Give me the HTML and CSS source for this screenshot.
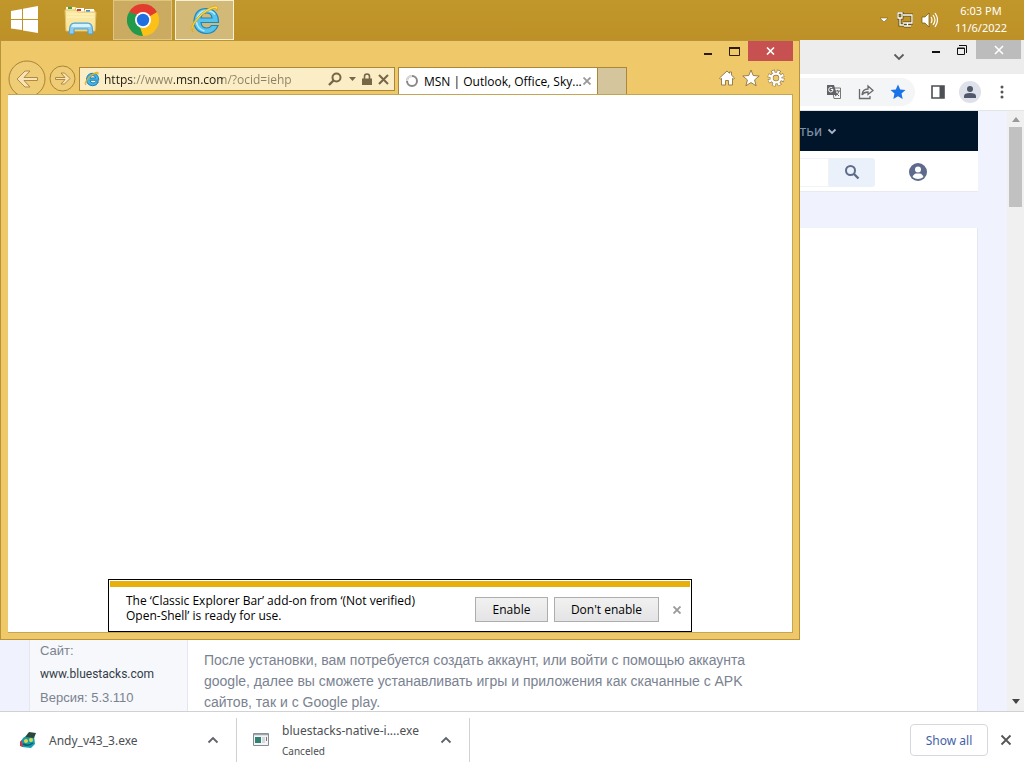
FILE: index.html
```html
<!DOCTYPE html>
<html lang="en">
<head>
  <meta charset="UTF-8">
  <title>Desktop</title>
  <link rel="stylesheet" href="styles.css">
</head>
<body>

  <header class="taskbar">
    <button class="start" aria-label="Start">
      <svg width="28" height="28" viewBox="0 0 28 28" fill="#fff"><path d="M0 5l11-2v10H0zM12 2.800L27 0v13H12zM0 14h11v10L0 22.500zM12 14h15v13l-15-2.500z"/></svg>
    </button>
    <button class="task" aria-label="File Explorer">
      <svg width="34" height="30" viewBox="0 0 34 30">
        <path d="M2 2h10l2 3h17v20H2z" fill="#e8c868"/>
        <path d="M2 2h9v4H2z" fill="#fdf3cf"/><path d="M4 2h4v2H4z" fill="#3fa34d"/><path d="M12 3h8v4h-8z" fill="#fff"/><path d="M13 4h4v2h-4z" fill="#d0402f"/><path d="M21 4h9v4h-9z" fill="#fff"/><path d="M22 5h4v2h-4z" fill="#3a8fd8"/>
        <path d="M1 5h11l2 2h18l-1 19H2z" fill="#fae8a0" stroke="#e3c267"/>
        <path d="M3 9h27M3 12h27" stroke="#fff4c4"/>
        <path d="M5 29l1-8q1-3 4-3h14q3 0 4 3l1 8h-5v-5H10v5z" fill="#8ccdf0" stroke="#4f9fd0"/>
        <path d="M9 19h16l2 3H7z" fill="#d5f2ff"/>
      </svg>
    </button>
    <button class="task task-open" aria-label="Google Chrome">
      <svg width="32" height="32" viewBox="0 0 32 32">
        <path d="M16 16L2.140 8A16 16 0 0 1 29.860 8z" fill="#e33b2e"/>
        <path d="M16 16L29.860 8A16 16 0 0 1 16 32z" fill="#fbc116"/>
        <path d="M16 16v16A16 16 0 0 1 2.140 8z" fill="#229a4b"/>
        <path d="M16 8h13.860L16 16z" fill="#e33b2e"/><path d="M22.900 20L16 32l-4-12z" fill="#fbc116"/><path d="M9 20L2.140 8 14 12z" fill="#229a4b"/>
        <circle cx="16" cy="16" r="8" fill="#fff"/><circle cx="16" cy="16" r="6.200" fill="#1f6fe0"/>
      </svg>
    </button>
    <button class="task task-active" aria-label="Internet Explorer">
      <svg width="32" height="32" viewBox="0 0 32 32">
        <path d="M29.500 18.500H12q.5 5.500 6 5.500 3 0 4.500-2.500h6.500Q26 29.500 17.500 29.500 5 28.500 5 17 6 4.500 17.500 4.500 29.500 5.500 29.500 18.500zM12 14h11q-.5-5-5.500-5T12 14z" fill="#58c4ee" stroke="#1a86be" stroke-width="1.200"/>
        <path d="M8 14q2-6 8-7.500 7-.5 10 4M7.500 18q1 7 8 9" fill="none" stroke="#b8ecfb" stroke-width="1.500"/>
        <path d="M4 28Q-1 26 7 15 18 3 26 2q4 0 2 5 0-4-5-2Q13 9 6 19q-4 7-2 9z" fill="#ffe14a" stroke="#d8a51b" stroke-width=".8"/>
      </svg>
    </button>
    <div class="tray">
      <svg width="10" height="6" viewBox="0 0 10 6"><path d="M1 1h8L5 5z" fill="#fff" stroke="#6d5213" stroke-width=".5"/></svg>
      <svg width="16" height="16" viewBox="0 0 16 16" fill="none"><path d="M6 3h9v8H6M10.500 11v3M7 14h7M3 6v7h4M1 1h4v5H1z" stroke="#5f4a18" stroke-width="3"/><path d="M6 3h9v8H6M10.500 11v3M7 14h7M3 6v7h4M1 1h4v5H1z" stroke="#fff" stroke-width="1.300"/></svg>
      <svg width="17" height="16" viewBox="0 0 17 16"><path d="M1 5h3l4-4v14l-4-4H1z" fill="#fff" stroke="#6d5213" stroke-width=".7"/><path d="M10 5q2 3 0 6M12 3q4 5 0 10M14 1q5 7 0 14" fill="none" stroke="#fff" stroke-width="1.200"/></svg>
      <div class="clock">
        <time>6:03 PM</time>
        <time>11/6/2022</time>
      </div>
    </div>
  </header>

  <main class="desktop">
    <section class="chrome">
      <div class="chrome-title">
        <button class="tab-search" aria-label="Search tabs">
          <svg width="12" height="8" viewBox="0 0 12 8"><path d="M1.500 1.500L6 6l4.500-4.500" fill="none" stroke="#5c5c5c" stroke-width="1.800"/></svg>
        </button>
        <button class="chrome-control" aria-label="Minimize">
          <svg width="10" height="10" viewBox="0 0 10 10"><path d="M1 6h8v2H1z" fill="#111"/></svg>
        </button>
        <button class="chrome-control" aria-label="Restore">
          <svg width="12" height="12" viewBox="0 0 12 12" fill="none" stroke="#111"><path d="M3 1.500h7.500V9"/><path d="M1.500 4h7v6.500h-7z"/><path d="M1 4.500h8"/></svg>
        </button>
        <button class="chrome-close" aria-label="Close">
          <svg width="10" height="10" viewBox="0 0 10 10"><path d="M1 1l8 8M9 1L1 9" stroke="#fff" stroke-width="1.600"/></svg>
        </button>
      </div>

      <div class="chrome-toolbar">
        <div class="omnibox">
          <button aria-label="Translate">
            <svg width="16" height="16" viewBox="0 0 16 16"><path d="M6 4h8.500v10.500H8z" fill="none" stroke="#777"/><path d="M1 1h7l3 10H1z" fill="#5f6368"/><path d="M7 5.500H4.800M7 5.500q0 2.500-2.200 2.500T2.700 5.700 4.800 3.300l1.500.6" fill="none" stroke="#fff" stroke-width="1"/><path d="M9 7h5M11.500 6v1M13 7q-1 4-4 5M10 9l3 3" fill="none" stroke="#666"/></svg>
          </button>
          <button aria-label="Share">
            <svg width="16" height="16" viewBox="0 0 16 16" fill="none" stroke="#666a6e" stroke-width="1.300"><path d="M1.500 5v9.500H12V12"/><path d="M4 11q.500-6 6-6V2l5 4.500-5 4V8q-4 0-6 3z"/></svg>
          </button>
          <button aria-label="Bookmark">
            <svg width="16" height="16" viewBox="0 0 16 16"><path d="M8 .5l2.200 5 5.300.5-4 3.600 1.200 5.400L8 12.200 3.300 15l1.200-5.400L.5 6l5.300-.5z" fill="#1a73e8"/></svg>
          </button>
        </div>
        <button aria-label="Side panel">
          <svg width="14" height="14" viewBox="0 0 14 14"><path d="M1 1h12v12H1z" fill="#fff" stroke="#4c4f53" stroke-width="1.600"/><path d="M8.500 1H13v12H8.500z" fill="#4c4f53"/></svg>
        </button>
        <button class="profile" aria-label="Profile">
          <svg width="14" height="14" viewBox="0 0 14 14" fill="#50586b"><circle cx="7" cy="4" r="3"/><path d="M1 13v-2q0-3 6-3t6 3v2z"/></svg>
        </button>
        <button aria-label="Menu">
          <svg width="4" height="14" viewBox="0 0 4 14" fill="#555"><circle cx="2" cy="2" r="1.500"/><circle cx="2" cy="7" r="1.500"/><circle cx="2" cy="12" r="1.500"/></svg>
        </button>
      </div>

      <div class="viewport">
        <div class="site" lang="ru">
          <nav class="site-nav">
            <a href="#">Статьи
              <svg width="10" height="7" viewBox="0 0 10 7"><path d="M1.500 1.500L5 5l3.500-3.500" fill="none" stroke="#a9b4c9" stroke-width="1.800"/></svg>
            </a>
          </nav>
          <form class="site-search">
            <input type="search" aria-label="Поиск">
            <button type="button" class="search-button" aria-label="Найти">
              <svg width="16" height="16" viewBox="0 0 16 16" fill="none" stroke="#5e6c8c"><circle cx="6.500" cy="6.500" r="4.500" stroke-width="2"/><path d="M10 10l4.500 4.500" stroke-width="2.400"/></svg>
            </button>
            <button type="button" class="account" aria-label="Аккаунт">
              <svg width="18" height="18" viewBox="0 0 18 18"><circle cx="9" cy="9" r="9" fill="#5d6a8b"/><circle cx="9" cy="6.500" r="3" fill="#fff"/><path d="M3.500 14Q5 10.500 7 10.500h4q2 0 3.500 3.500Q12 16 9 16t-5.500-2z" fill="#fff"/></svg>
            </button>
          </form>
          <div class="article">
            <aside class="facts">
              <p>Сайт:</p>
              <p><a href="#">www.bluestacks.com</a></p>
              <p>Версия: 5.3.110</p>
            </aside>
            <p class="article-text">После установки, вам потребуется создать аккаунт, или войти с помощью аккаунта google, далее вы сможете устанавливать игры и приложения как скачанные с APK сайтов, так и с Google play.</p>
          </div>
        </div>
        <div class="scrollbar">
          <svg width="8" height="5" viewBox="0 0 8 5"><path d="M0 5h8L4 0z" fill="#999"/></svg>
          <div class="thumb"></div>
          <svg width="8" height="5" viewBox="0 0 8 5"><path d="M0 0h8L4 5z" fill="#444"/></svg>
        </div>
      </div>

      <footer class="downloads">
        <div class="download">
          <svg width="16" height="16" viewBox="0 0 16 16"><path d="M0 10l4-5 10-1 1 8-4 4-9-1z" fill="#159eae"/><path d="M5 5l4-5 7 1-2 5z" fill="#29483a"/><path d="M0 10l2-2 1 7-3-1z" fill="#c33c55"/><circle cx="6" cy="9" r="2" fill="#e8d443"/><circle cx="11" cy="8" r="2" fill="#d8d84b"/><path d="M3 12q5 3 10-1" fill="none" stroke="#075e72" stroke-width="1.500"/></svg>
          <span class="download-text"><span class="file">Andy_v43_3.exe</span></span>
          <button aria-label="Andy_v43_3.exe options">
            <svg width="12" height="8" viewBox="0 0 12 8"><path d="M1.500 6.500L6 2l4.500 4.500" fill="none" stroke="#5f6368" stroke-width="1.800"/></svg>
          </button>
        </div>
        <div class="download">
          <svg width="16" height="14" viewBox="0 0 16 14"><path d="M.5.5h15v12H.5z" fill="#f4f4f6" stroke="#858b92"/><path d="M1 1.500h14" stroke="#9da4ab" stroke-width="1.500"/><path d="M2 4h6v6H2z" fill="#328273"/><path d="M9 5h3M9 7h3M9 9h3" stroke="#b7bcc4"/><path d="M13.500 4v4" stroke="#777"/></svg>
          <span class="download-text">
            <span class="file">bluestacks-native-i....exe</span>
            <small>Canceled</small>
          </span>
          <button aria-label="bluestacks-native-i....exe options">
            <svg width="12" height="8" viewBox="0 0 12 8"><path d="M1.500 6.500L6 2l4.500 4.500" fill="none" stroke="#5f6368" stroke-width="1.800"/></svg>
          </button>
        </div>
        <button class="show-all">Show all</button>
        <button class="close-downloads" aria-label="Close downloads">
          <svg width="12" height="12" viewBox="0 0 12 12"><path d="M1.500 1.500l9 9M10.500 1.500l-9 9" stroke="#555" stroke-width="1.800"/></svg>
        </button>
      </footer>
    </section>

    <section class="ie">
      <div class="ie-top">
        <div class="ie-nav">
          <button class="back" aria-label="Back">
            <svg width="38" height="38" viewBox="0 0 38 38"><circle cx="19" cy="19" r="18" fill="#efcd76" stroke="#a98336"/><path d="M29.500 17.500v3H16l6 6.500h-5l-8-8 8-8h5l-6 6.500z" fill="#f8e3b4" stroke="#b08a42"/></svg>
          </button>
          <button class="forward" aria-label="Forward">
            <svg width="27" height="27" viewBox="0 0 27 27"><circle cx="13.500" cy="13.500" r="12.500" fill="#efcd76" stroke="#a98336"/><path d="M6.500 12.500v2H16L12 19h3.500l5.500-5.500L15.500 8H12l4 4.500z" fill="#f8e3b4" stroke="#b08a42"/></svg>
          </button>
          <div class="address">
            <svg width="16" height="16" viewBox="0 0 32 32"><path d="M29.500 18.500H12q.5 5.500 6 5.500 3 0 4.500-2.500h6.500Q26 29.500 17.500 29.500 5 28.500 5 17 6 4.500 17.500 4.500 29.500 5.500 29.500 18.500zM12 14h11q-.5-5-5.500-5T12 14z" fill="#42b5ea" stroke="#1780ba" stroke-width="2"/><path d="M4 28Q-1 26 7 15 18 3 26 2q4 0 2 5 0-4-5-2Q13 9 6 19q-4 7-2 9z" fill="#f5c92c" stroke="#d09d18"/></svg>
            <input type="text" value="https://www.msn.com/?ocid=iehp" aria-label="Address">
            <button aria-label="Search">
              <svg width="14" height="14" viewBox="0 0 14 14" fill="none" stroke="#766747"><circle cx="8.500" cy="5.500" r="4" stroke-width="2"/><path d="M5.500 8.500L1 13" stroke-width="2.400"/></svg>
            </button>
            <button aria-label="Show address bar autocomplete">
              <svg width="8" height="5" viewBox="0 0 8 5"><path d="M1 0h7L4.500 4z" fill="#766747"/></svg>
            </button>
            <button aria-label="Security report">
              <svg width="10" height="13" viewBox="0 0 10 13"><path d="M2.500 6V3.500a2.500 2.500 0 0 1 5 0V6" fill="none" stroke="#766747" stroke-width="1.600"/><path d="M0 5.500h10V12H0z" fill="#766747"/></svg>
            </button>
            <button aria-label="Stop">
              <svg width="11" height="11" viewBox="0 0 11 11"><path d="M1 1l9 9M10 1l-9 9" stroke="#766747" stroke-width="2"/></svg>
            </button>
          </div>
          <div class="ie-tab">
            <svg width="14" height="14" viewBox="0 0 14 14" fill="none" stroke-width="2"><circle cx="7" cy="7" r="5" stroke="#888"/><path d="M2 7a5 5 0 0 1 5-5" stroke="#ddd"/></svg>
            <span>MSN | Outlook, Office, Sky...</span>
            <button aria-label="Close tab">
              <svg width="8" height="8" viewBox="0 0 8 8"><path d="M.5.5l7 7M7.500.5l-7 7" stroke="#999" stroke-width="1.800"/></svg>
            </button>
          </div>
          <button class="new-tab" aria-label="New tab"></button>
        </div>
        <div class="ie-side">
          <div class="caption">
            <button aria-label="Minimize">
              <svg width="10" height="10" viewBox="0 0 10 10"><path d="M1 7h8v2H1z" fill="#2b1d05"/></svg>
            </button>
            <button aria-label="Maximize">
              <svg width="11" height="9" viewBox="0 0 11 9"><path d="M.5 1h10v7.500H.5z" fill="none" stroke="#2b1d05"/><path d="M0 1h11" stroke="#2b1d05" stroke-width="2"/></svg>
            </button>
            <button class="ie-close" aria-label="Close">
              <svg width="9" height="8" viewBox="0 0 9 8"><path d="M1 .5l7 7M8 .5l-7 7" stroke="#fff" stroke-width="1.600"/></svg>
            </button>
          </div>
          <div class="tools">
            <button aria-label="Home">
              <svg width="16" height="16" viewBox="0 0 16 16"><path d="M8 1l2.500 2.300V2h2v3.200l3 2.800-1 1.200-1-.9V15H9.500v-4.500h-3V15h-4V8.300l-1 .9-1-1.200z" fill="#fff" stroke="#8f7440" stroke-width=".9"/></svg>
            </button>
            <button aria-label="Favorites">
              <svg width="18" height="18" viewBox="0 0 18 18"><path d="M9 1l2.200 5.500 6 .5-4.600 3.900 1.500 5.900L9 13.600l-5.100 3.200 1.500-5.900L.8 7l6-.5z" fill="#fff" stroke="#8f7440" stroke-width=".9"/></svg>
            </button>
            <button aria-label="Tools">
              <svg width="18" height="18" viewBox="0 0 18 18" fill="none"><circle cx="9" cy="9" r="6.500" stroke="#8f7440" stroke-width="4" stroke-dasharray="3.300 1.805"/><circle cx="9" cy="9" r="4.400" stroke="#8f7440" stroke-width="3.600"/><circle cx="9" cy="9" r="6.500" stroke="#fff" stroke-width="3" stroke-dasharray="2.300 2.805" stroke-dashoffset="-.5"/><circle cx="9" cy="9" r="4.400" stroke="#fff" stroke-width="2.400"/></svg>
            </button>
          </div>
        </div>
      </div>

      <div class="ie-page">
        <div class="notice" role="alert">
          <p>The ‘Classic Explorer Bar’ add-on from ‘(Not verified) Open-Shell’ is ready for use.</p>
          <button class="notice-button">Enable</button>
          <button class="notice-button wide">Don't enable</button>
          <button class="notice-close" aria-label="Dismiss">
            <svg width="8" height="8" viewBox="0 0 8 8"><path d="M.5.5l7 7M7.500.5l-7 7" stroke="#999" stroke-width="1.800"/></svg>
          </button>
        </div>
      </div>
    </section>
  </main>

</body>
</html>
```

FILE: styles.css
```css
* {
  box-sizing: border-box;
}

body {
  margin: 0;
  height: 100vh;
  display: flex;
  flex-direction: column;
  overflow: hidden;
  font-family: "Noto Sans", "Open Sans", sans-serif;
  font-size: 12px;
  color: #000;
}

button {
  display: flex;
  align-items: center;
  justify-content: center;
  flex: none;
  padding: 0;
  border: 0;
  background: none;
  font: inherit;
}

svg {
  display: block;
  flex: none;
}

p {
  margin: 0;
}

/* taskbar */
.taskbar {
  display: flex;
  flex: none;
  gap: 3px;
  height: 40px;
  background: linear-gradient(#c1962a, #bd9127);
}

.start {
  width: 48px;
  padding-left: 2px;
}

.task {
  width: 59px;
  border: 1px solid transparent;
}

.task-open {
  background: #cbab62;
  border-color: #e0c67d;
}

.task-active {
  background: #d3b978;
  border-color: #f8f0d2;
}

.tray {
  display: flex;
  align-items: center;
  gap: 8px;
  margin-left: auto;
  padding-right: 16px;
}

.clock {
  display: flex;
  flex-direction: column;
  width: 54px;
  margin-left: 8px;
  padding-bottom: 3px;
  align-items: center;
  line-height: 17px;
  font-size: 11px;
  color: #fff;
}

.desktop {
  position: relative;
  flex: 1;
  min-height: 0;
}

/* chrome window */
.chrome {
  height: 100%;
  display: flex;
  flex-direction: column;
  background: #fff;
}

.chrome-title {
  display: flex;
  flex: none;
  justify-content: flex-end;
  align-items: flex-start;
  height: 34px;
  padding-right: 3px;
  background: #ededed;
}

.tab-search {
  width: 24px;
  height: 34px;
  margin-right: 12px;
}

.chrome-control {
  width: 26px;
  height: 19px;
}

.chrome-close {
  width: 45px;
  height: 19px;
  margin-left: 1px;
  background: #bcbcbc;
}

.chrome-toolbar {
  display: flex;
  flex: none;
  align-items: center;
  height: 37px;
  padding-right: 20px;
  border-bottom: 1px solid #e3e4e6;
}

.omnibox {
  display: flex;
  flex: 1;
  align-items: center;
  justify-content: flex-end;
  gap: 16px;
  height: 28px;
  margin-right: 16px;
  padding-right: 9px;
  border-radius: 14px;
  background: #f4f5f6;
}

.profile {
  width: 22px;
  height: 22px;
  margin: 0 19px 0 14px;
  border-radius: 50%;
  background: #dfe1ea;
}

.viewport {
  display: flex;
  flex: 1;
  min-height: 0;
  background: #f0f2fd;
}

.site {
  display: flex;
  flex: 1;
  flex-direction: column;
  min-width: 0;
  margin: 0 29px;
  overflow: hidden;
  font-family: "Liberation Sans", Arial, sans-serif;
  color: #7a8290;
}

.site-nav {
  display: flex;
  flex: none;
  align-items: center;
  justify-content: flex-end;
  height: 40px;
  padding-right: 141px;
  background: #001529;
}

.site-nav a {
  display: flex;
  align-items: center;
  gap: 5px;
  font-family: Roboto, sans-serif;
  font-size: 14px;
  color: #7f8fa6;
  text-decoration: none;
}

.site-search {
  display: flex;
  flex: none;
  align-items: center;
  justify-content: flex-end;
  height: 41px;
  padding: 2px 51px 0 0;
  background: #fff;
  border-bottom: 1px solid #e8eaf3;
}

.site-search input {
  width: 400px;
  height: 29px;
  border: 1px solid #f1f3f7;
  background: #fff;
}

.search-button {
  width: 46px;
  height: 29px;
  background: #eaf1fa;
  border-radius: 0 3px 3px 0;
}

.account {
  margin-left: 34px;
}

.article {
  display: flex;
  flex: 1;
  align-items: flex-end;
  min-height: 0;
  margin-top: 36px;
  background: #fff;
  border-left: 1px solid #e4e7ef;
  border-right: 1px solid #e4e7ef;
}

.facts {
  display: flex;
  flex: none;
  flex-direction: column;
  justify-content: flex-end;
  align-self: stretch;
  width: 158px;
  padding: 0 0 2px 10px;
  border-right: 1px solid #e4e7ef;
  background: #f6f8fb;
  font-size: 13px;
  line-height: 23px;
}

.facts a {
  font-family: Roboto, sans-serif;
  font-size: 12px;
  color: #333c48;
  text-decoration: none;
}

.article-text {
  max-width: 576px;
  padding-left: 16px;
  margin-bottom: -2px;
  font-size: 14px;
  line-height: 21px;
}

.scrollbar {
  display: flex;
  flex: none;
  flex-direction: column;
  align-items: center;
  width: 17px;
  padding: 6px 0 7px;
  background: #f0f0f0;
}

.thumb {
  width: 13px;
  height: 80px;
  margin: 5px 0 auto;
  background: #c1c1c1;
}

.downloads {
  display: flex;
  flex: none;
  align-items: center;
  height: 57px;
  padding-right: 12px;
  border-top: 1px solid #cfd1d5;
  background: #fff;
  color: #4c4f53;
}

.download {
  display: flex;
  align-items: center;
  width: 237px;
  height: 44px;
  padding: 0 17px 0 20px;
  border-right: 1px solid #cfd1d5;
}

.download + .download {
  width: 233px;
  padding-left: 16px;
}

.download-text {
  display: flex;
  flex: 1;
  flex-direction: column;
  margin-left: 13px;
  padding-top: 1px;
  white-space: nowrap;
  line-height: 20px;
}

.download small {
  font-size: 10px;
}

.show-all {
  width: 78px;
  height: 32px;
  margin-left: auto;
  border: 1px solid #d5d8dd;
  border-radius: 4px;
  color: #3f62a8;
}

.close-downloads {
  margin-left: 12px;
}

/* internet explorer window */
.ie {
  position: absolute;
  top: 0;
  left: 0;
  display: flex;
  flex-direction: column;
  width: 800px;
  height: 600px;
  padding: 0 6px 6px 7px;
  border: 1px solid #b8933a;
  background: #efc869;
  font-family: "Open Sans", "Noto Sans", sans-serif;
}

.ie-top {
  display: flex;
  flex: none;
  height: 53px;
}

.ie-nav {
  display: flex;
  flex: 1;
  align-items: flex-end;
  min-width: 0;
}

.back {
  height: 34px;
  overflow: hidden;
  align-items: flex-start;
}

.forward {
  margin: 0 3px 2px;
}

.address {
  display: flex;
  align-items: center;
  width: 316px;
  height: 24px;
  margin: 0 3px 3px 0;
  padding: 0 5px 0 4px;
  border: 1px solid #ab8739;
  background: #fbedc5;
}

.address input {
  flex: 1;
  min-width: 0;
  margin-left: 4px;
  padding: 0;
  border: 0;
  outline: 0;
  font: inherit;
  /* scheme and domain dark, the rest of the address muted */
  background: linear-gradient(90deg, #1d1a12 30px, #8a8063 30px 70px, #1d1a12 70px 119px, #8a8063 119px);
  -webkit-background-clip: text;
  background-clip: text;
  color: transparent;
}

.address button {
  margin-left: 6px;
}

.ie-tab {
  display: flex;
  align-items: center;
  width: 200px;
  height: 27px;
  padding: 0 6px 0 6px;
  border: 1px solid #ab8739;
  border-bottom: 0;
  background: #fff;
}

.ie-tab span {
  flex: 1;
  margin-left: 5px;
  white-space: nowrap;
}

.new-tab {
  width: 29px;
  height: 27px;
  border: 1px solid #ab8739;
  border-width: 1px 1px 0 0;
  background: #d5c59c;
}

.ie-side {
  display: flex;
  flex: none;
  flex-direction: column;
  align-items: flex-end;
}

.caption {
  display: flex;
  height: 20px;
}

.caption button {
  width: 27px;
}

.caption .ie-close {
  width: 45px;
  background: #c75050;
}

.tools {
  display: flex;
  align-items: center;
  gap: 7px;
  height: 33px;
  padding-right: 8px;
}

.ie-page {
  display: flex;
  flex: 1;
  flex-direction: column;
  justify-content: flex-end;
  align-items: center;
  border: 1px solid #c4a553;
  border-left: 0;
  background: #fff;
}

.notice {
  display: flex;
  align-items: center;
  width: 584px;
  height: 53px;
  padding: 8px 10px 0 17px;
  border: 1px solid #000;
  /* amber warning stripe along the top */
  background: linear-gradient(#e8ae0c, #e8ae0c) center 1px / 580px 6px no-repeat #fff;
}

.notice p {
  width: 300px;
  margin-right: auto;
  padding-bottom: 3px;
  line-height: 15px;
}

.notice-button {
  width: 73px;
  height: 25px;
  margin-right: 6px;
  border: 1px solid #adadad;
  background: linear-gradient(#f1f1f1, #e4e4e6);
}

.wide {
  width: 105px;
}

.notice-close {
  margin-left: 8px;
}
```
